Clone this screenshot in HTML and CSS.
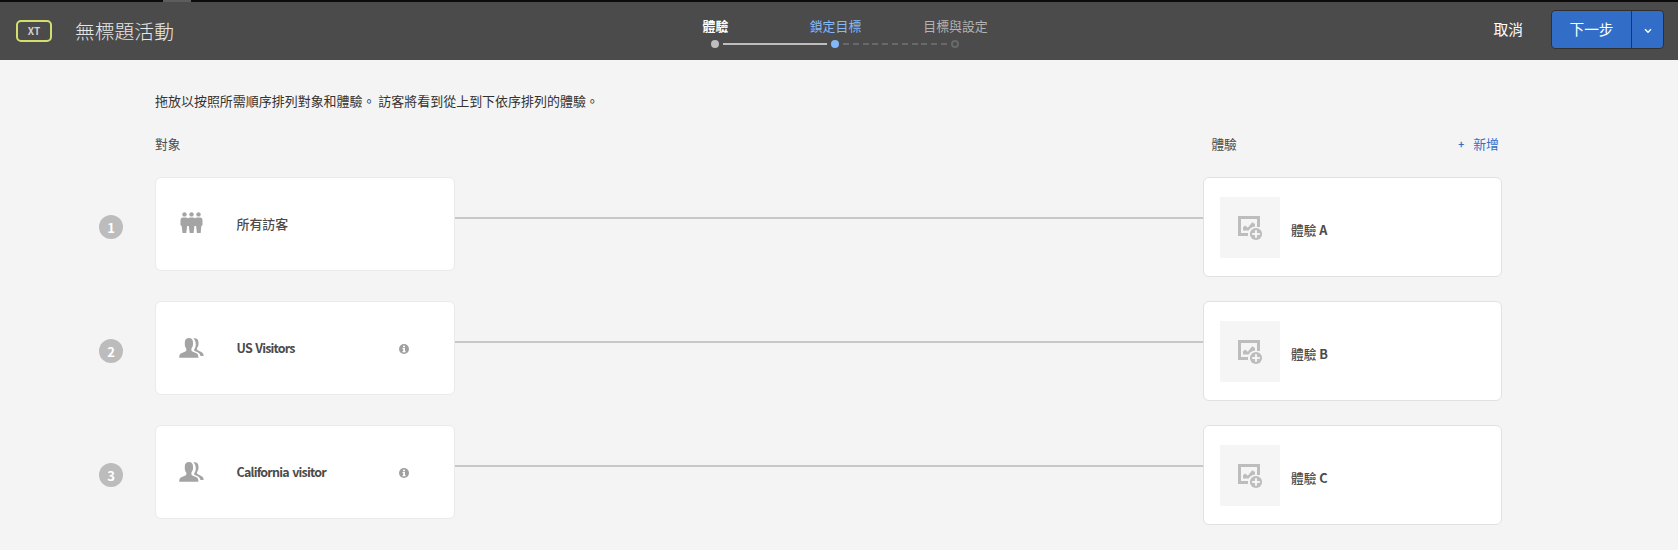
FILE: index.html
```html
<!DOCTYPE html>
<html lang="zh-Hant">
<head>
<meta charset="utf-8">
<title>無標題活動</title>
<link rel="stylesheet" href="styles.css">
</head>
<body>
<svg class="defs" width="0" height="0" aria-hidden="true">
  <symbol id="crowd" viewBox="0 0 24 22">
    <circle cx="5" cy="2.4" r="2.2"/><circle cx="12" cy="2.4" r="2.2"/><circle cx="19" cy="2.4" r="2.2"/>
    <path d="M3.2 5.6H6.8L8.5 6.3 10.2 5.6H13.8L15.5 6.3 17.2 5.6H20.8Q23 5.8 23 8V13L21.8 14.2 21.2 21H17.4L16.6 14H14.9L14.1 21H10.2L9.3 14H7.6L6.8 21H3L2.2 14.2 1 13V8Q1 5.8 3.2 5.6Z"/>
  </symbol>
  <symbol id="users" viewBox="0 0 25 20">
    <path d="M10 .1C7.3 .1 5.8 1.7 5.8 4.4V6.4C5.8 8 6.4 9.4 7.3 10.4V12.2C7.3 12.8 7 13.2 6.3 13.5L2.4 15.2C.8 15.9 .3 17 .2 19.8H19.4C19.3 17 18.9 15.9 17.3 15.2L13.4 13.5C12.7 13.2 12.4 12.8 12.4 12.2V10.4C13.4 9.3 14 7.9 14 6.3V4.4C14 1.7 12.6 .1 10 .1Z"/>
    <path d="M14.3 .3C17.4-.3 19.5 1.2 19.5 4.5V6C19.5 7.7 18.9 9 18 10V11.1C18 11.6 18.3 11.9 18.8 12.2L22.3 14C24 14.8 24.5 15.8 24.6 18H21.5C21.1 16 20.2 15 18.7 14.2L15.7 12.9C15.1 12.6 14.9 12.2 15.2 11.6 17.5 8.6 17.4 2.8 14.3 .3Z"/>
  </symbol>
  <symbol id="image-add" viewBox="0 0 25 25">
    <path d="M0 0H22V11H19V3H3V17H10V20H0Z"/>
    <path d="M5 14.5V11.3L7.2 9.6 9.8 11.8 14.2 6.2 17 8V10.5C13.8 11 11.6 12.4 10.8 14.5Z"/>
    <circle cx="18" cy="18" r="6.1"/>
    <path class="cut" d="M17 14.2H19V17H21.8V19H19V21.8H17V19H14.2V17H17Z"/>
  </symbol>
  <symbol id="info" viewBox="0 0 10 10">
    <circle cx="5" cy="5" r="5"/>
    <path class="cut-white" d="M4 1.7H6V3.2H4ZM3.5 4H6V7.2H6.7V8.2H3.4V7.2H4.2V5H3.5Z"/>
  </symbol>
</svg>

<header class="topbar">
  <span class="top-tab"></span>
  <div class="brand">
    <span class="type-badge">XT</span>
    <h1 class="title">無標題活動</h1>
  </div>
  <ol class="steps">
    <li class="step done"><span class="step-label">體驗</span><span class="dot"></span></li>
    <li class="step current"><span class="step-label">鎖定目標</span><span class="dot"></span></li>
    <li class="step todo"><span class="step-label">目標與設定</span><span class="dot"></span></li>
  </ol>
  <div class="actions">
    <span class="cancel">取消</span>
    <div class="split-button">
      <span class="next">下一步</span>
      <span class="more"><svg width="8" height="6" viewBox="0 0 8 6"><path d="M1 1.2 4 4.2 7 1.2" fill="none" stroke="#fff" stroke-width="1.5"/></svg></span>
    </div>
  </div>
</header>

<main class="content">
  <p class="hint">拖放以按照所需順序排列對象和體驗。 訪客將看到從上到下依序排列的體驗。</p>
  <div class="heads">
    <span class="head">對象</span>
    <span class="head head-exp">體驗</span>
    <span class="add"><span class="plus">+</span><span>新增</span></span>
  </div>
  <div class="rows">
    <section class="row">
      <span class="number">1</span>
      <div class="audience"><svg class="aud-icon crowd"><use href="#crowd"/></svg><span class="name cjk">所有訪客</span></div>
      <span class="link"></span>
      <div class="experience"><span class="thumb"><svg><use href="#image-add"/></svg></span><span class="exp-name">體驗 <b>A</b></span></div>
    </section>
    <section class="row">
      <span class="number">2</span>
      <div class="audience"><svg class="aud-icon users"><use href="#users"/></svg><span class="name">US Visitors</span><svg class="info"><use href="#info"/></svg></div>
      <span class="link"></span>
      <div class="experience"><span class="thumb"><svg><use href="#image-add"/></svg></span><span class="exp-name">體驗 <b>B</b></span></div>
    </section>
    <section class="row">
      <span class="number">3</span>
      <div class="audience"><svg class="aud-icon users"><use href="#users"/></svg><span class="name">California visitor</span><svg class="info"><use href="#info"/></svg></div>
      <span class="link"></span>
      <div class="experience"><span class="thumb"><svg><use href="#image-add"/></svg></span><span class="exp-name">體驗 <b>C</b></span></div>
    </section>
  </div>
</main>
</body>
</html>
```
FILE: styles.css
```css
* { box-sizing: border-box; }
body {
  margin: 0;
  height: 550px;
  overflow: hidden;
  background: #f4f4f4;
  color: #4b4b4b;
  font-family: "Noto Sans CJK TC", "Noto Sans", sans-serif;
  font-size: 13px;
  line-height: 20px;
}
.defs { position: absolute; }

.topbar {
  position: relative;
  display: grid;
  grid-template-columns: 655px 360px 1fr;
  height: 60px;
  border-top: 2px solid #0c0c0c;
  background: #4b4b4b;
}
.top-tab { position: absolute; top: -2px; left: 163px; width: 28px; height: 2px; background: #5d5d5d; }
.brand { display: flex; align-items: center; height: 57px; padding-left: 16px; }
.type-badge {
  width: 36px;
  height: 22px;
  border: 2px solid #d3de6c;
  border-radius: 5px;
  color: #d0d0d0;
  font-size: 10px;
  font-weight: 700;
  line-height: 17px;
  text-align: center;
}
.title { margin: 0 0 0 23px; color: #e8e8e8; font-size: 19.8px; font-weight: 300; line-height: 30px; }

.steps { display: grid; grid-template-columns: repeat(3, 120px); margin: 0; padding: 14px 0 0; list-style: none; }
.step { display: flex; flex-direction: column; align-items: center; position: relative; }
.step-label { height: 20px; padding-left: 1px; font-size: 12.9px; line-height: 20px; white-space: nowrap; }
.dot { width: 8px; height: 8px; margin-top: 4px; border-radius: 50%; }
.done { color: #fff; font-weight: 700; }
.done .dot { background: #bebebe; }
.current { color: #83b9fb; font-weight: 400; }
.current .dot { background: #83b9fb; }
.todo { color: #b3b3b3; }
.todo .dot { border: 2px solid #696969; }
.done::after, .current::after { content: ""; position: absolute; top: 27px; left: 68px; width: 104px; height: 2px; background: #bebebe; }
.current::after { background: repeating-linear-gradient(90deg, #696969 0 6px, transparent 6px 9.8px); }

.actions { display: flex; justify-content: flex-end; padding: 8px 14px 0 0; color: #fff; font-size: 14.7px; line-height: 34px; }
.cancel { margin-right: 28px; padding-top: 2px; }
.split-button { display: flex; width: 113px; height: 39px; border: 1px solid #303030; border-radius: 4px; background: #326ec8; overflow: hidden; }
.next { width: 80px; border-right: 1px solid #343434; text-align: center; line-height: 36px; }
.more { display: flex; flex: 1; align-items: center; justify-content: center; padding-top: 3px; }

.content { padding: 31px 0 0 99px; }
.hint { margin: 0 0 0 56px; color: #323232; font-size: 12.97px; line-height: 20px; }
.heads { display: flex; height: 20px; margin: 23px 179px 0 56px; }
.head { font-size: 12.7px; }
.head-exp { margin-left: 1031px; }
.add { display: flex; margin-left: auto; gap: 9px; color: #326ec8; font-size: 12.9px; }
.plus { font-weight: 700; font-size: 10px; }

.rows { display: grid; gap: 24px; margin-top: 23px; }
.row { display: grid; grid-template-columns: 56px 300px 748px 299px; align-items: start; height: 100px; }
.number {
  width: 24px;
  height: 24px;
  margin-top: 38px;
  border-radius: 50%;
  background: #bcbcbc;
  color: #fff;
  font-weight: 700;
  font-size: 13px;
  line-height: 25px;
  text-align: center;
}
.audience { display: flex; align-items: center; height: 94px; padding-left: 23px; border: 1px solid #eaeaea; border-radius: 6px; background: #fff; }
.aud-icon { width: 25px; height: 20px; fill: #a4a4a4; }
.crowd { height: 22px; margin-top: -2px; }
.users { margin-top: -1px; }
.name { width: 162px; margin-left: 32.5px; font-size: 12.5px; font-weight: 700; letter-spacing: -.8px; word-spacing: 1.3px; }
.cjk { font-weight: 500; font-size: 12.9px; letter-spacing: 0; }
.info { width: 10px; height: 10px; margin-top: 1px; fill: #a0a0a0; }
.cut { fill: #f5f5f5; }
.cut-white { fill: #fff; }
.link { height: 2px; margin-top: 40px; background: #c8c8c8; }
.experience { display: flex; align-items: center; height: 100px; padding-left: 16px; border: 1px solid #e1e1e1; border-radius: 6px; background: #fff; }
.thumb { display: grid; place-items: start; width: 60px; height: 61px; padding: 19px 0 0 18px; background: #f5f5f5; }
.thumb svg { width: 25px; height: 25px; fill: #bdbdbd; }
.exp-name { margin: 5px 0 0 11px; font-size: 12.7px; font-weight: 500; }
```
